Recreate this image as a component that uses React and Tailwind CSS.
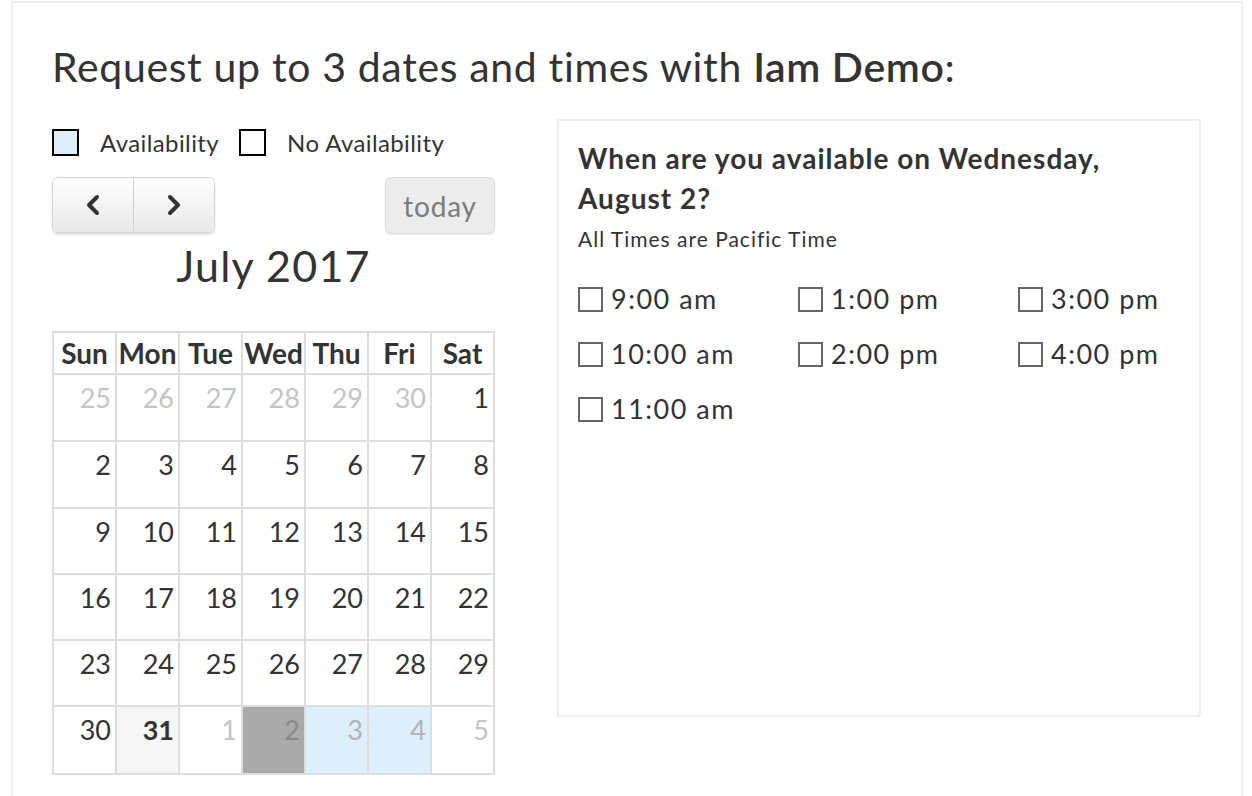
const weeks = [
  [25, 26, 27, 28, 29, 30, 1],
  [2, 3, 4, 5, 6, 7, 8],
  [9, 10, 11, 12, 13, 14, 15],
  [16, 17, 18, 19, 20, 21, 22],
  [23, 24, 25, 26, 27, 28, 29],
  [30, 31, 1, 2, 3, 4, 5],
];

const days = ["Sun", "Mon", "Tue", "Wed", "Thu", "Fri", "Sat"];

const times = [
  "9:00 am",
  "1:00 pm",
  "3:00 pm",
  "10:00 am",
  "2:00 pm",
  "4:00 pm",
  "11:00 am",
];

// 行ごとの高さ
const rowHeights = ["h-[67px]", "h-[67px]", "h-[66px]", "h-[66px]", "h-[66px]", "h-[68px]"];

// 各セルのスタイルを決める
function cellClass(w, d) {
  if (w === 0 && d < 6) return "text-[#c4c4c4]";
  if (w === 5) {
    if (d === 1) return "bg-[#f6f6f6] font-bold text-[#333]";
    if (d === 2) return "text-[#c4c4c4]";
    if (d === 3) return "bg-[#aaaaaa] text-[#8a8a8a]";
    if (d === 4 || d === 5) return "bg-[#ddeefc] text-[#b0b4b8]";
    if (d === 6) return "text-[#c4c4c4]";
  }
  return "text-[#333]";
}

export default function App() {
  return (
    <div className="min-h-[796px] bg-white font-['Lato',sans-serif] text-[#333]">
      <div className="ml-[11px] mt-[1px] w-[1232px] min-h-[795px] border-x-2 border-t-2 border-[#efefef] pl-[39px] pt-[40px]">
        {/* タイトル */}
        <h1 className="text-[41px] leading-[48px] font-normal tracking-[0.65px]">
          Request up to 3 dates and times with{" "}
          <span className="font-semibold">Iam Demo</span>:
        </h1>

        <div className="mt-[28px] flex gap-[62px]">
          {/* 左カラム: カレンダー */}
          <div className="w-[443px]">
            <div className="mt-[10px] flex items-center text-[24px] leading-[27px] tracking-[0.4px]">
              <span className="w-[27px] h-[27px] border-2 border-black bg-[#ddeefc]" />
              <span className="ml-[21px]">Availability</span>
              <span className="ml-[20px] w-[27px] h-[27px] border-2 border-black bg-white" />
              <span className="ml-[21px]">No Availability</span>
            </div>

            <div className="mt-[21px] flex items-start justify-between">
              <div className="flex h-[56px] rounded-[6px] border border-[#d4d4d4] shadow-[0_2px_2px_rgba(0,0,0,0.12)] overflow-hidden">
                <button className="w-[81px] flex items-center justify-center bg-gradient-to-b from-white to-[#e8e8e8] border-r border-[#d0d0d0]">
                  <svg width="20" height="24" viewBox="0 0 20 24" fill="none">
                    <path d="M14 4 L6 12 L14 20" stroke="#333" strokeWidth="4" strokeLinecap="round" strokeLinejoin="round" />
                  </svg>
                </button>
                <button className="w-[80px] flex items-center justify-center bg-gradient-to-b from-white to-[#e8e8e8]">
                  <svg width="20" height="24" viewBox="0 0 20 24" fill="none">
                    <path d="M6 4 L14 12 L6 20" stroke="#333" strokeWidth="4" strokeLinecap="round" strokeLinejoin="round" />
                  </svg>
                </button>
              </div>
              <button className="w-[110px] h-[57px] rounded-[6px] border border-[#dcdcdc] bg-[#ececec] text-[28px] tracking-[0.8px] text-[#7b7b7b] shadow-[0_1px_2px_rgba(0,0,0,0.08)]">
                today
              </button>
            </div>

            <h2 className="mt-[4px] text-center text-[43px] leading-[56px] font-normal tracking-[1.2px]">
              July 2017
            </h2>

            {/* カレンダー表 */}
            <table className="mt-[37px] w-[443px] border-collapse table-fixed">
              <thead>
                <tr className="h-[42px]">
                  {days.map((d) => (
                    <th key={d} className="border-2 border-[#dddddd] text-[28px] font-bold leading-[30px] px-0">
                      {d}
                    </th>
                  ))}
                </tr>
              </thead>
              <tbody>
                {weeks.map((week, w) => (
                  <tr key={w} className={rowHeights[w]}>
                    {week.map((n, d) => (
                      <td
                        key={d}
                        className={`border-2 border-[#dddddd] align-top text-right pr-[4px] pt-[8px] text-[27px] leading-[30px] ${cellClass(w, d)}`}
                      >
                        {n}
                      </td>
                    ))}
                  </tr>
                ))}
              </tbody>
            </table>
          </div>

          {/* 右カラム: 時間選択 */}
          <div className="w-[644px] h-[598px] border-2 border-[#efefef] px-[19px] pt-[17px]">
            <h3 className="text-[28px] leading-[40px] font-bold tracking-[1px]">
              When are you available on Wednesday,
              <br />
              August 2?
            </h3>
            <p className="mt-[9px] text-[21px] leading-[24px] tracking-[1px]">All Times are Pacific Time</p>
            <div className="mt-[35px] grid grid-cols-[220px_220px_180px] gap-y-[29px]">
              {times.map((t) => (
                <label key={t} className="flex h-[26px] items-center text-[27px] leading-[26px] tracking-[1.5px]">
                  <span className="w-[25px] h-[25px] border-2 border-[#666] bg-white" />
                  <span className="ml-[8px]">{t}</span>
                </label>
              ))}
            </div>
          </div>
        </div>
      </div>
    </div>
  );
}
